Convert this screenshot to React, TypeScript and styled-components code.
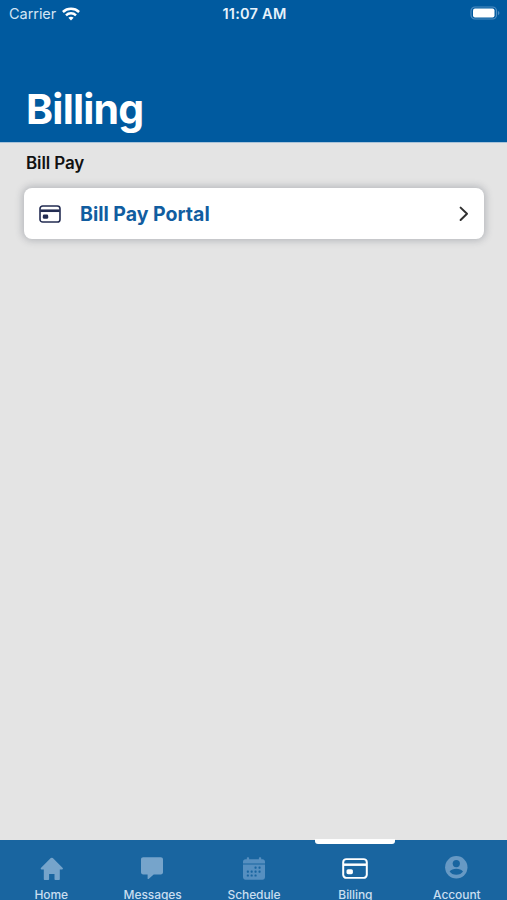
import React from "react";
import styled, { createGlobalStyle } from "styled-components";

const GlobalStyle = createGlobalStyle`
  * { box-sizing: border-box; }
  html, body { margin: 0; padding: 0; overflow: hidden; }
  body { font-family: Inter, "Liberation Sans", sans-serif; }
`;

const Screen = styled.div`
  width: 100%;
  height: 900px;
  display: flex;
  flex-direction: column;
  overflow: hidden;
  background: #e4e4e4;
`;

const Header = styled.header`
  height: 142px;
  flex: none;
  display: flex;
  flex-direction: column;
  justify-content: space-between;
  background: #005a9f;
  color: #fff;
`;

const StatusBar = styled.div`
  display: grid;
  grid-template-columns: 1fr auto 1fr;
  align-items: center;
  height: 27px;
  padding: 0 7px 0 9px;
`;

const Carrier = styled.div`
  display: flex;
  align-items: center;
  gap: 6px;
  font-size: 14.5px;
  letter-spacing: -0.05px;
  color: #d3e5f4;
`;

const Time = styled.time`
  font-size: 14.5px;
  font-weight: 600;
  letter-spacing: 0.25px;
  color: #e6f2fb;
`;

const BatterySlot = styled.div`
  display: flex;
  justify-content: flex-end;
`;

const Title = styled.h1`
  margin: 0;
  padding: 0 25px 8px 26px;
  font-size: 41px;
  line-height: 50px;
  font-weight: 700;
  letter-spacing: -0.8px;
`;

const Content = styled.main`
  flex: 1;
  padding: 10px 23px 0 24px;
  border-top: 1px solid #a9c3d9;
`;

const SectionTitle = styled.h2`
  margin: 0 0 14px 2px;
  font-size: 17px;
  line-height: 21px;
  font-weight: 600;
  letter-spacing: -0.12px;
  color: #111;
`;

const LinkCard = styled.button`
  width: 100%;
  height: 51px;
  display: flex;
  align-items: center;
  padding: 0 14px 0 15px;
  border: 0;
  border-radius: 8px;
  background: #fff;
  box-shadow: 0 0 7px 2px rgba(70, 75, 90, 0.28);
  color: #232c52;
  font-family: inherit;
`;

const CardLabel = styled.span`
  flex: 1;
  margin-left: 19px;
  text-align: left;
  font-size: 19.5px;
  font-weight: 700;
  letter-spacing: 0;
  color: #115da0;
`;

const TabBar = styled.nav`
  height: 60px;
  flex: none;
  display: grid;
  grid-template-columns: repeat(5, 1fr);
  background: #1965a0;
`;

const Tab = styled.a<{ $active?: boolean }>`
  display: flex;
  flex-direction: column;
  align-items: center;
  color: ${(p) => (p.$active ? "#fff" : "#76a4cb")};
`;

const Indicator = styled.span<{ $active?: boolean }>`
  width: 80px;
  height: 5px;
  margin-top: -1px;
  flex: none;
  border-radius: 0 0 3px 3px;
  background: ${(p) => (p.$active ? "#fff" : "transparent")};
`;

const IconSlot = styled.span`
  height: 42px;
  flex: none;
  display: flex;
  align-items: center;
  justify-content: center;
  padding-top: 6px;
`;

const TabLabel = styled.span`
  flex: none;
  padding-left: 1px;
  font-size: 12px;
  line-height: 18px;
  font-weight: 500;
  letter-spacing: -0.08px;
  color: #c9def0;
`;

const WifiIcon = () => (
  <svg width="18" height="14" viewBox="0 0 18 14" fill="none" stroke="#fff" strokeWidth="2.5">
    <path d="M.9 5C5.4.8 12.6.8 17.1 5" />
    <path d="M4 8.3c2.8-2.6 7.2-2.6 10 0" />
    <path d="M6.4 10.7c1.5-1.3 3.7-1.3 5.2 0L9 13.5Z" fill="#fff" stroke="none" />
  </svg>
);

const BatteryIcon = () => (
  <svg width="31" height="15" viewBox="0 0 31 15">
    <rect x="2" y="1" width="25.5" height="12" rx="4" fill="none" stroke="#4f8dc2" strokeWidth="1.2" />
    <rect x="4" y="2.5" width="21.5" height="9" rx="2" fill="#fff" />
    <path d="M29 5c1.9.7 1.9 3.5 0 4.2Z" fill="#4f8dc2" />
  </svg>
);

const CardIcon = ({ width, height, bold }: { width: number; height: number; bold?: boolean }) => (
  <svg width={width} height={height} viewBox="0 0 26 22" fill="none" stroke="currentColor" preserveAspectRatio="none">
    <rect x="1.2" y="1.2" width="23.6" height="19.6" rx="3.2" strokeWidth={bold ? 2 : 1.9} />
    <path d="M1.5 7h23" strokeWidth={bold ? 2.6 : 3.2} />
    <rect x="4.5" y="11.7" width="6.4" height="5.2" rx="1.6" fill="currentColor" stroke="none" />
  </svg>
);

const ChevronIcon = () => (
  <svg width="12" height="16" viewBox="0 0 12 16" fill="none" stroke="#303030" strokeWidth="2" strokeLinecap="round" strokeLinejoin="round">
    <path d="m2.6 1.6 6.4 6.2-6.4 6.2" />
  </svg>
);

const HomeIcon = () => (
  <svg width="24" height="24" viewBox="-.8 -.8 24 24" fill="currentColor">
    <path d="M11 1.3a1.5 1.5 0 0 1 2 0l9.7 9.7c.8.8.4 1.7-.6 1.7H20v9.4c0 .7-.4 1.1-1 1.1h-3.5c-.5 0-.8-.3-.8-.8v-5.2H9.3v5.2c0 .5-.3.8-.8.8H5c-.6 0-1-.4-1-1.1v-9.4H1.9c-1 0-1.4-.9-.6-1.7Z" />
  </svg>
);

const MessageIcon = () => (
  <svg width="24" height="24" viewBox="0 0 24 24" fill="currentColor">
    <path d="M3.2 1.3h17.6c1.3 0 2.2.9 2.2 2.2v12.8c0 1.3-.9 2.2-2.2 2.2h-7.1l-5.1 4.4c-.5.4-1 .2-1-.5v-3.9H3.2c-1.3 0-2.2-.9-2.2-2.2V3.5c0-1.3.9-2.2 2.2-2.2Z" />
  </svg>
);

const dots = [
  [13.5, 10.8], [17.5, 10.8],
  [5.8, 14.8], [9.6, 14.8], [13.5, 14.8], [17.5, 14.8],
  [5.8, 18.6], [9.6, 18.6], [13.5, 18.6],
];

const CalendarIcon = () => (
  <svg width="24" height="24" viewBox="-1 -.8 24 24" fill="#568fc0">
    <path d="M3.5 2.5h1.3V1.2c0-.5.3-.8.8-.8h.7c.5 0 .8.3.8.8v1.3h9.8V1.2c0-.5.3-.8.8-.8h.7c.5 0 .8.3.8.8v1.3h1.3c1.5 0 2.5 1 2.5 2.5v1.8H1V5c0-1.5 1-2.5 2.5-2.5Z" />
    <path d="M1 7.8h22v12.5c0 1.6-1 2.6-2.6 2.6H3.6C2 22.9 1 21.9 1 20.3Z" />
    {dots.map(([x, y]) => (
      <rect key={`${x}-${y}`} x={x - 1} y={y - 1} width="2.1" height="2.1" rx=".6" fill="#1965a0" />
    ))}
  </svg>
);

const AccountIcon = () => (
  <svg width="24" height="24" viewBox="-.3 .9 24 24">
    <circle cx="12" cy="12.2" r="11.2" fill="#6799c4" />
    <circle cx="12" cy="8.5" r="3.6" fill="#1965a0" />
    <path d="M5.3 16.4c1.4-2 3.9-2.8 6.7-2.8s5.3.8 6.7 2.8c-1.2 2-3.8 3.3-6.7 3.3s-5.5-1.3-6.7-3.3Z" fill="#1965a0" />
  </svg>
);

const tabs = [
  { label: "Home", icon: <HomeIcon /> },
  { label: "Messages", icon: <MessageIcon /> },
  { label: "Schedule", icon: <CalendarIcon /> },
  { label: "Billing", icon: <CardIcon width={26} height={21} bold />, active: true },
  { label: "Account", icon: <AccountIcon /> },
];

export default function App() {
  return (
    <>
      <GlobalStyle />
      <Screen>
        <Header>
          <StatusBar>
            <Carrier>Carrier<WifiIcon /></Carrier>
            <Time>11:07 AM</Time>
            <BatterySlot><BatteryIcon /></BatterySlot>
          </StatusBar>
          <Title>Billing</Title>
        </Header>
        <Content>
          <SectionTitle>Bill Pay</SectionTitle>
          <LinkCard>
            <CardIcon width={22} height={18} />
            <CardLabel>Bill Pay Portal</CardLabel>
            <ChevronIcon />
          </LinkCard>
        </Content>
        <TabBar>
          {tabs.map((tab) => (
            <Tab key={tab.label} $active={tab.active}>
              <Indicator $active={tab.active} />
              <IconSlot>{tab.icon}</IconSlot>
              <TabLabel>{tab.label}</TabLabel>
            </Tab>
          ))}
        </TabBar>
      </Screen>
    </>
  );
}
